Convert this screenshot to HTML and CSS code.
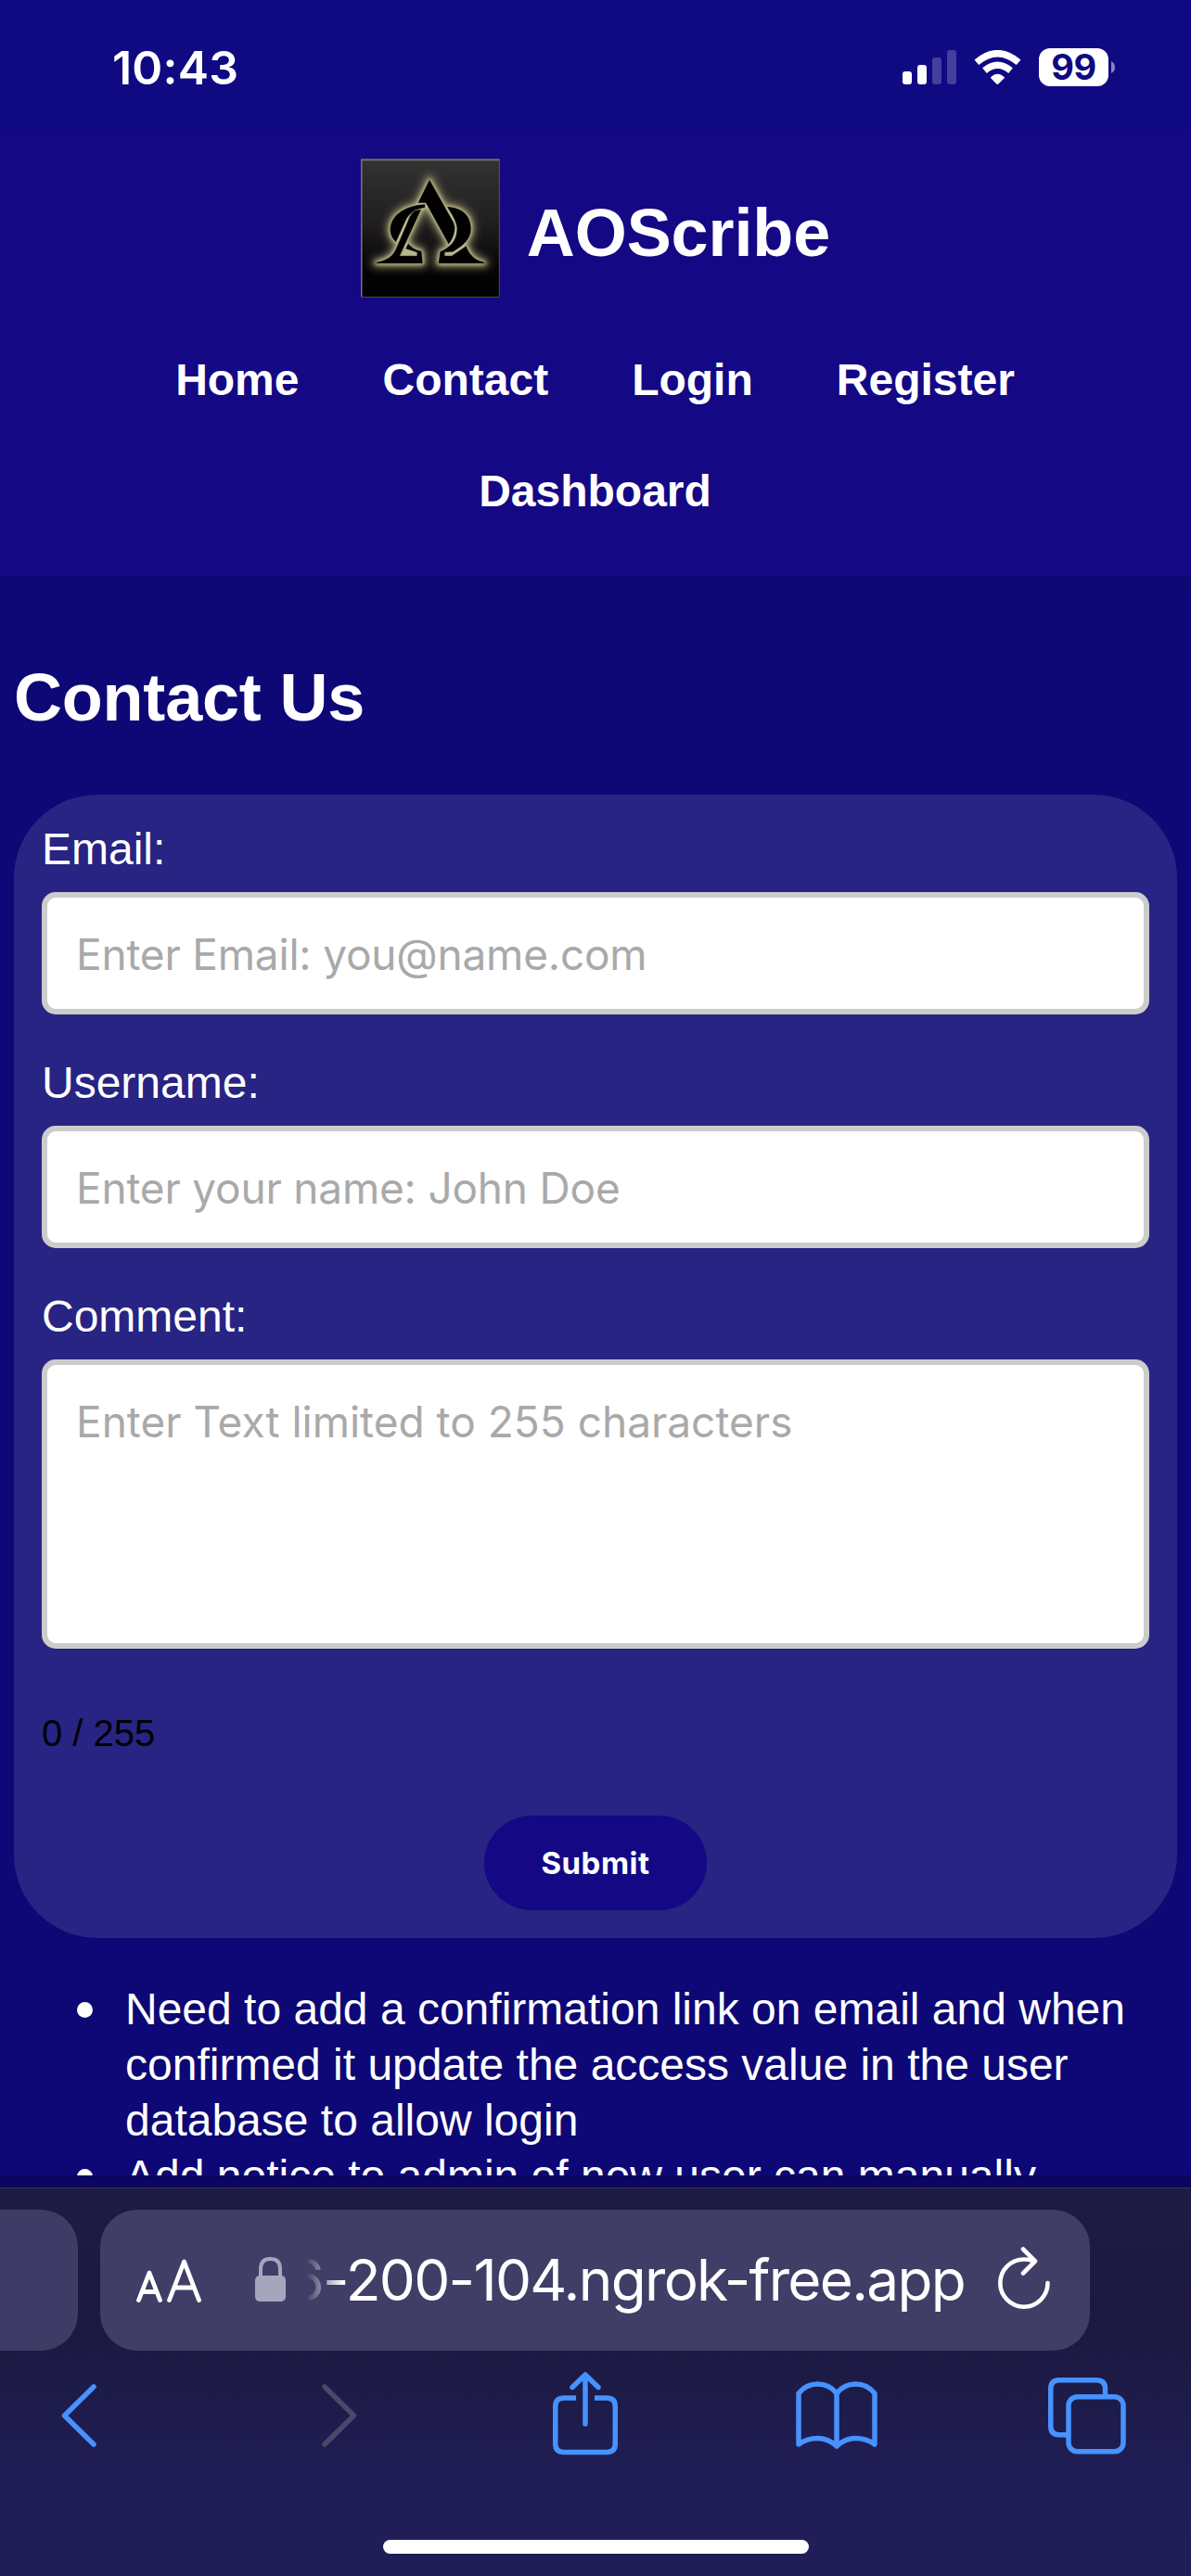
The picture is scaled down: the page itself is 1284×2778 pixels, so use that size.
FILE: index.html
```html
<!DOCTYPE html>
<html lang="en">
<head>
<meta charset="utf-8">
<title>AOScribe</title>
<link rel="stylesheet" href="styles.css">
</head>
<body>
<div class="status">
  <span class="clock">10:43</span>
  <div class="indicators">
    <svg class="signal" viewBox="0 0 58 37"><g fill="#fff"><rect y="23" width="10" height="14" rx="3"/><rect x="16" y="16" width="10" height="21" rx="3"/><g opacity=".22"><rect x="32" y="8" width="10" height="29" rx="3"/><rect x="48" width="10" height="37" rx="3"/></g></g></svg>
    <svg class="wifi" viewBox="300 71 153 112"><g fill="none" stroke="#fff" stroke-width="22"><path d="M308 111Q376 53 445 111"/><path d="M334 138Q376 103 419 138"/></g><path d="M353 161Q376 137 400 161L380 181Q376 185 372 181Z" fill="#fff"/></svg>
    <div class="battery"><span class="level">99</span><svg class="nub" viewBox="0 0 4 13"><path d="M0 0Q4 2 4 6.500Q4 11 0 13Z" fill="#8784c0"/></svg></div>
  </div>
</div>
<header class="header">
  <div class="brand">
    <svg class="logo" viewBox="54 48 450 450">
      <defs>
        <linearGradient id="plate" x1="0" y1="0" x2="0" y2="1"><stop offset="0" stop-color="#333"/><stop offset=".45" stop-color="#211f20"/><stop offset=".8" stop-color="#050404"/><stop offset="1" stop-color="#000"/></linearGradient>
        <filter id="wide" x="-30%" y="-30%" width="160%" height="160%"><feGaussianBlur stdDeviation="14"/></filter>
        <filter id="near" x="-30%" y="-30%" width="160%" height="160%"><feGaussianBlur stdDeviation="7"/></filter>
        <g id="mark">
          <path d="M276 115L238 192L264 192L338 326Q358 302 359 270Q357 255 348 243Z"/>
          <path d="M304 388L310 348C345 335 366 310 364 270C360 245 345 225 332 203C385 205 411 235 411 275C411 305 390 328 352 350L326 352V362H348L395 330Q410 375 455 383V388Z"/>
          <path d="M262 195C190 200 148 235 148 280Q150 305 168 319L198 252Q212 215 262 207Z"/>
          <path d="M250 212L228 215Q210 232 205 252L165 345Q150 376 103 383V388H255L251 347Q222 342 207 322L198 340L235 352V362H181Z"/>
        </g>
      </defs>
      <rect x="54" y="48" width="450" height="450" fill="url(#plate)"/>
      <use href="#mark" fill="#8f8d62" stroke="#8f8d62" stroke-width="20" filter="url(#wide)"/>
      <use href="#mark" fill="#c3c193" stroke="#c3c193" stroke-width="6" filter="url(#near)"/>
      <path d="M181 362L198 340L235 352V362ZM326 352L352 350L348 362H326Z" fill="#b9b78a"/>
      <use href="#mark" fill="#000" stroke="#b5b38c" stroke-width="1.500"/>
      <path d="M56 496V52H503" fill="none" stroke="#77756f" stroke-width="5"/>
      <path d="M56 496H502V50" fill="none" stroke="#55534f" stroke-width="3"/>
    </svg>
    <span class="name">AOScribe</span>
  </div>
  <nav class="nav"><a>Home</a><a>Contact</a><a>Login</a><a>Register</a><a>Dashboard</a></nav>
</header>
<main class="main">
  <h1 class="title">Contact Us</h1>
  <form class="card">
    <label class="label" for="email">Email:</label>
    <input class="field single" id="email" placeholder="Enter Email: you@name.com">
    <label class="label" for="user">Username:</label>
    <input class="field single" id="user" placeholder="Enter your name: John Doe">
    <label class="label" for="comment">Comment:</label>
    <textarea class="field area" id="comment" placeholder="Enter Text limited to 255 characters"></textarea>
    <div class="counter">0 / 255</div>
    <button class="submit" type="button">Submit</button>
  </form>
  <ul class="notes">
    <li class="note">Need to add a confirmation link on email and when confirmed it update the access value in the user database to allow login</li>
    <li class="note">Add notice to admin of new user can manually</li>
  </ul>
</main>
<div class="strip"></div>
<footer class="browser">
  <div class="tabs">
    <div class="previous"></div>
    <div class="address">
      <svg class="text-size" viewBox="0 0 72 48" fill="none" stroke="#fff" stroke-width="4.800" stroke-linecap="round" stroke-linejoin="round"><path d="M2.500 44.500L14 15L25.500 44.500M6.500 35.500H21.500"/><path d="M35.500 44.500L51.500 3L67.500 44.500M41 31H62"/></svg>
      <svg class="lock" viewBox="0 0 33 48"><rect y="20" width="33" height="28" rx="5" fill="#a7a5bd"/><path d="M6 22V13Q6 2 16.500 2Q27 2 27 13V22" fill="none" stroke="#a7a5bd" stroke-width="4"/></svg>
      <span class="url">6-200-104.ngrok-free.app</span>
      <svg class="reload" viewBox="0 0 56 67" fill="none" stroke="#fff" stroke-width="4.600" stroke-linecap="round" stroke-linejoin="round"><path d="M53.500 39A25.600 25.600 0 1 1 28 13.500Q34 13.500 39 15.500"/><path d="M27 2.500L40 15.500L27 28.500"/></svg>
    </div>
  </div>
  <div class="tools">
    <svg class="chevron" viewBox="0 0 38 68" fill="none" stroke="#4692ff" stroke-width="5.500" stroke-linecap="round" stroke-linejoin="round"><path d="M35 3L3.500 34L35 65"/></svg>
    <svg class="chevron forward" viewBox="0 0 38 68" fill="none" stroke="#4b4869" stroke-width="5.500" stroke-linecap="round" stroke-linejoin="round"><path d="M3 3L34.500 34L3 65"/></svg>
    <svg class="share" viewBox="0 0 70 90" fill="none" stroke="#4692ff" stroke-width="5.500"><path d="M25 28H12Q2.750 28 2.750 37V77.500Q2.750 86.500 12 86.500H58Q67.250 86.500 67.250 77.500V37Q67.250 28 58 28H45"/><path d="M35 56V3.500M21 16.500L35 3L49 16.500" stroke-linecap="round" stroke-linejoin="round"/></svg>
    <svg class="book" viewBox="0 0 88 74" fill="none" stroke="#4692ff" stroke-width="5.500" stroke-linejoin="round" stroke-linecap="round"><path d="M44 70V13Q36 3 23.500 3Q11 3 3 13V68Q12 61.500 23.500 61.500Q35 61.500 44 70Q53 61.500 64.500 61.500Q76 61.500 85 68V13Q77 3 64.500 3Q52 3 44 13"/></svg>
    <svg class="pages" viewBox="0 0 84 83" fill="none" stroke="#4692ff" stroke-width="5.500"><path d="M61.500 18V12Q61.500 2.750 52 2.750H12Q2.750 2.750 2.750 12V52.500Q2.750 61.750 12 61.750H20"/><rect x="22" y="20.750" width="59" height="59" rx="9.500"/></svg>
  </div>
  <div class="home-bar"></div>
</footer>
</body>
</html>
```
FILE: styles.css
```css
* { box-sizing: border-box; }
body { margin: 0; width: 1284px; height: 2778px; display: flex; flex-direction: column; overflow: hidden; background: #0d0875; color: #fff; font-family: "Liberation Sans", Arial, sans-serif; font-size: 48px; line-height: 60px; }
svg { display: block; flex: none; }
.status { height: 141px; flex: none; display: flex; justify-content: space-between; align-items: flex-start; padding: 41px 82px 0 121px; background: #0f0a82; font-family: Inter, sans-serif; }
.clock { font-size: 50px; font-weight: 600; line-height: 64px; letter-spacing: 0.2px; }
.indicators { display: flex; align-items: center; height: 41px; margin-top: 11px; }
.signal { width: 58px; height: 37px; margin-right: 19px; }
.wifi { width: 51px; height: 37px; margin-right: 19px; }
.battery { display: flex; align-items: center; gap: 3px; }
.level { width: 75px; height: 41px; border-radius: 12px; background: #fff; color: #0f0a82; font-size: 38px; font-weight: 700; line-height: 41px; text-align: center; letter-spacing: -0.5px; }
.nub { width: 4px; height: 13px; }
.header { height: 480px; flex: none; padding-top: 30px; background: #140885; }
.brand { display: flex; justify-content: center; align-items: center; gap: 29px; }
.logo { width: 150px; height: 150px; }
.name { padding-top: 10px; font-size: 72px; font-weight: 700; line-height: 84px; letter-spacing: -0.1px; }
.nav { display: flex; flex-wrap: wrap; justify-content: center; gap: 60px 90px; width: 1000px; margin: 59px auto 0; padding-right: 1px; font-weight: 700; }
.main { flex: 1; min-height: 0; overflow: hidden; padding: 89px 15px 0; }
.title { margin: 0; font-size: 72px; font-weight: 700; line-height: 84px; letter-spacing: -0.2px; }
.card { display: flex; flex-direction: column; margin-top: 63px; padding: 29px 30px 30px; border-radius: 90px; background: #272483; }
.label { height: 60px; margin-bottom: 16px; }
.field { width: 100%; margin: 0; padding: 0 31px; border: 6px solid #ccc; border-radius: 15px; outline: 0; resize: none; background: #fff; font-family: Inter, sans-serif; font-size: 46px; line-height: 60px; }
.field::placeholder { color: #a9a9a9; opacity: 1; }
.single { height: 132px; margin-bottom: 44px; padding-top: 1px; letter-spacing: -0.2px; }
.area { height: 312px; margin-bottom: 66px; padding-top: 31px; }
.counter { color: #000; font-size: 40px; line-height: 50px; }
.submit { align-self: center; width: 240px; height: 102px; margin-top: 64px; padding: 0; border: 0; border-radius: 51px; background: #140885; color: #fff; font-family: Inter, sans-serif; font-size: 33px; font-weight: 700; letter-spacing: 0.5px; }
.notes { margin: 47px 0 0; padding: 0 0 0 68px; list-style: none; }
.note { display: grid; grid-template-columns: 17px 1fr; column-gap: 35px; }
.note::before { content: ""; width: 17px; height: 17px; margin-top: 22px; border-radius: 50%; background: #fff; }
.strip { height: 13px; flex: none; background: #0b065f; }
.browser { height: 419px; flex: none; border-top: 1px solid #3a3a4c; background: linear-gradient(#1e1c44, #1b1842 30%, #1d1b46 50%, #201d55 72%, #201d58); }
.tabs { display: flex; gap: 24px; padding-top: 23px; }
.previous { width: 84px; height: 152px; border-radius: 0 40px 40px 0; background: #3e3b66; }
.address { display: flex; align-items: flex-start; width: 1067px; height: 152px; padding-left: 39px; border-radius: 40px; background: #403d66; }
.text-size { width: 72px; height: 48px; margin-top: 53px; }
.lock { width: 33px; height: 48px; margin: 51px 0 0 56px; }
.url { display: flex; justify-content: flex-end; width: 710px; margin: 34px 0 0 22px; overflow: hidden; font-family: Inter, sans-serif; font-size: 62px; line-height: 84px; letter-spacing: -1.7px; white-space: nowrap; -webkit-mask-image: linear-gradient(90deg, transparent, #000 40px); mask-image: linear-gradient(90deg, transparent, #000 40px); }
.reload { width: 56px; height: 67px; margin: 40px 0 0 36px; }
.tools { display: flex; align-items: center; height: 90px; margin-top: 25px; padding-left: 66px; }
.chevron { width: 38px; height: 68px; }
.forward { margin-left: 243px; }
.share { width: 70px; height: 90px; margin: -5px 0 0 211px; }
.book { width: 88px; height: 74px; margin-left: 192px; }
.pages { width: 84px; height: 83px; margin-left: 184px; }
.home-bar { width: 459px; height: 15px; margin: 89px auto 0; border-radius: 8px; background: #fff; }
```
